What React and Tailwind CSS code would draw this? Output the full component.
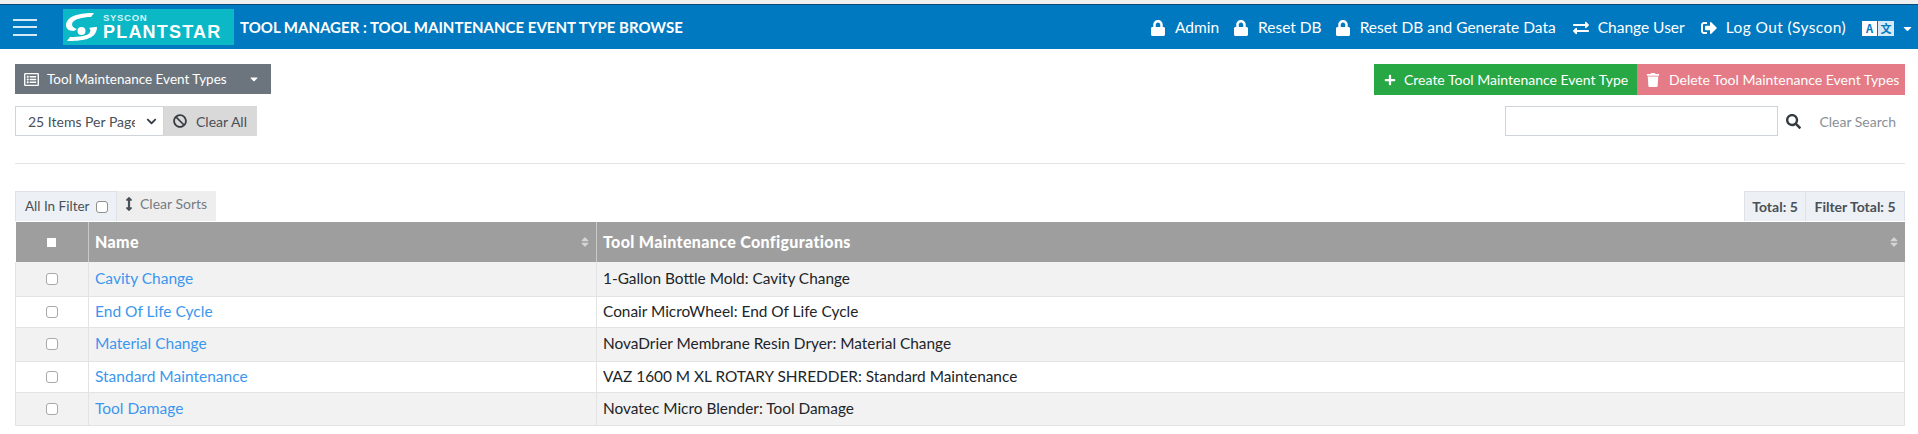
import { FaLock, FaExchangeAlt, FaSignOutAlt, FaPlus, FaTrash, FaSearch, FaBan, FaRegListAlt, FaSort, FaArrowsAltV, FaCaretDown, FaChevronDown } from 'react-icons/fa';

const rows = [
    { name: 'Cavity Change', config: '1-Gallon Bottle Mold: Cavity Change', h: 'h-[34px]' },
    { name: 'End Of Life Cycle', config: 'Conair MicroWheel: End Of Life Cycle', h: 'h-[31px]' },
    { name: 'Material Change', config: 'NovaDrier Membrane Resin Dryer: Material Change', h: 'h-[34px]' },
    { name: 'Standard Maintenance', config: 'VAZ 1600 M XL ROTARY SHREDDER: Standard Maintenance', h: 'h-[31px]' },
    { name: 'Tool Damage', config: 'Novatec Micro Blender: Tool Damage', h: 'h-[33px]' },
];

const NavItem = ({ icon, label, className, labelClass }) => (
    <span className={`flex items-center gap-[9px] ${className || ''}`}>
        {icon}
        <span className={`whitespace-nowrap ${labelClass || ''}`}>{label}</span>
    </span>
);

const RowCheck = () => (
    <input type="checkbox" className="mx-auto block h-[12px] w-[12px] appearance-none rounded-[3px] border border-[#a9a9a9] bg-white" />
);

const Logo = () => (
    <div className="ml-[26px] flex h-[36px] w-[171px] items-center bg-[#0ab8c6] pl-[3px] text-white">
        <svg viewBox="0 0 31 28" className="h-[28px] w-[31px] shrink-0" fill="#fff">
            <path d="M28 0C15 0 1 2 0 12c0 3 2 6 8 6 1-1 2-1 3-2-3-1-5-2-5-5C7 6 17 4 25 4z" />
            <circle cx="15.5" cy="18" r="4" />
            <path d="M31 14c-2 0-5 0-8 1 1 1 2 2 1 4-1 4-11 5-20 5l-3 4c14 0 30-1 30-14z" />
        </svg>
        <div className="ml-[6px] flex flex-col font-['Liberation_Sans',sans-serif] font-bold leading-none">
            <span className="text-[9.5px] tracking-[0.7px] text-[#d7f4f7]">SYSCON</span>
            <span className="mt-[1px] text-[18px] tracking-[1.2px]">PLANTSTAR</span>
        </div>
    </div>
);

export default function App() {
    return (
        <div className="min-h-[434px] bg-white font-['Lato',sans-serif] text-[14px] text-[#212529]">
            <div className="h-[4px] bg-[#efefef]" />
            <nav className="flex h-[45px] items-center border-t border-[#0b4a78] bg-[#0079c1] text-white">
                <div className="ml-[13px] flex w-[24px] flex-col gap-[5.5px]">
                    <div className="h-[2px] bg-[#d5e9f6]" />
                    <div className="h-[2px] bg-[#d5e9f6]" />
                    <div className="h-[2px] bg-[#d5e9f6]" />
                </div>
                <Logo />
                <h1 className="ml-[6px] text-[15px] font-bold">TOOL MANAGER : TOOL MAINTENANCE EVENT TYPE BROWSE</h1>
                <div className="ml-auto mt-[2px] flex items-center pr-[4px] text-[15.5px]">
                    <NavItem icon={<FaLock className="text-[16px]" />} label="Admin" />
                    <NavItem icon={<FaLock className="text-[16px]" />} label="Reset DB" className="ml-[14px]" />
                    <NavItem icon={<FaLock className="text-[16px]" />} label="Reset DB and Generate Data" className="ml-[13px]" />
                    <NavItem icon={<FaExchangeAlt className="text-[16px]" />} label="Change User" className="ml-[17px]" />
                    <NavItem icon={<FaSignOutAlt className="text-[16px]" />} label="Log Out (Syscon)" className="ml-[16px]" labelClass="tracking-[0.4px]" />
                    <div className="ml-[16px] flex h-[15px] w-[32px] gap-[1px] font-['Noto_Sans_CJK_SC','Noto_Sans',sans-serif] text-[11px] font-bold leading-[15px] text-[#0079c1]">
                        <span className="w-[15px] bg-white text-center">A</span>
                        <span className="w-[16px] bg-[#d5e9f6] text-center">文</span>
                    </div>
                    <FaCaretDown className="ml-[7px] text-[13px]" />
                </div>
            </nav>

            <div className="pl-[15px] pr-[13px]">
                <div className="mt-[15px] flex items-start justify-between">
                    <button className="flex h-[30px] w-[256px] items-center bg-[#6c757d] pl-[9px] pr-[11px] text-[13.5px] text-white">
                        <FaRegListAlt className="text-[15px]" />
                        <span className="ml-[8px]">Tool Maintenance Event Types</span>
                        <FaCaretDown className="ml-auto text-[12px]" />
                    </button>
                    <div className="flex h-[31px] text-[14px] text-white">
                        <button className="flex w-[263px] items-center gap-[8px] bg-[#28a745] pl-[10px]">
                            <FaPlus className="text-[12px]" /> Create Tool Maintenance Event Type
                        </button>
                        <button className="flex w-[268px] items-center gap-[9px] bg-[#e47b86] pl-[9px]">
                            <FaTrash className="text-[14px]" /> Delete Tool Maintenance Event Types
                        </button>
                    </div>
                </div>

                <div className="mt-[11px] flex items-center justify-between">
                    <div className="flex h-[30px]">
                        <div className="flex w-[149px] items-center border border-[#ced4da] bg-white pl-[12px] pr-[6px] text-[14px] text-[#495057]">
                            <span className="w-[107px] overflow-hidden whitespace-nowrap">25 Items Per Page</span>
                            <FaChevronDown className="ml-auto text-[11px] text-[#343a40]" />
                        </div>
                        <div className="flex w-[93px] items-center gap-[9px] bg-[#d9d9d9] pl-[9px] text-[14px] text-[#495057]">
                            <FaBan className="text-[14px] text-[#343a40]" /> Clear All
                        </div>
                    </div>
                    <div className="flex items-center">
                        <div className="h-[30px] w-[273px] border border-[#ced4da] bg-white" />
                        <FaSearch className="ml-[8px] text-[15px] text-[#343a40]" />
                        <span className="ml-[18px] mr-[9px] text-[14px] text-[#8a9096]">Clear Search</span>
                    </div>
                </div>

                <hr className="mt-[27px] border-[#e4e4e4]" />

                <div className="mt-[27px] flex items-end justify-between">
                    <div className="flex h-[30px] text-[13.5px] text-[#495057]">
                        <div className="flex w-[102px] items-center border border-b-0 border-[#dee2e6] bg-[#edf1f5] pl-[9px]">
                            All In Filter
                            <input type="checkbox" className="ml-[6px] h-[12px] w-[12px] appearance-none rounded-[3px] border border-[#8f8f8f] bg-white" />
                        </div>
                        <div className="flex w-[99px] items-center bg-[#eeeeee] pb-[5px] pl-[5px] text-[14px] text-[#757c83]">
                            <FaArrowsAltV className="text-[14px] text-[#495057]" />
                            <span className="ml-[4px]">Clear Sorts</span>
                        </div>
                    </div>
                    <div className="flex h-[30px] border border-b-0 border-[#dee2e6] bg-[#edf1f5] text-[14px] font-bold text-[#495057]">
                        <div className="flex w-[61px] items-center justify-center border-r border-[#dee2e6]">Total: 5</div>
                        <div className="flex w-[98px] items-center justify-center">Filter Total: 5</div>
                    </div>
                </div>

                <table className="mt-[1px] w-full table-fixed border-collapse text-[14px]">
                    <thead>
                        <tr className="h-[40px] bg-[#9e9e9e] text-left text-[16px] tracking-[0.35px] text-white">
                            <th className="w-[73px] border-r border-[#c9c9c9] p-0">
                                <div className="mx-auto h-[9px] w-[9px] bg-white" />
                            </th>
                            <th className="w-[508px] border-r border-[#c9c9c9] py-0 pl-[6px] pr-[5px] font-black">
                                <div className="flex items-center justify-between">
                                    <span>Name</span>
                                    <FaSort className="text-[12px] text-[#d5d5d5]" />
                                </div>
                            </th>
                            <th className="py-0 pl-[6px] pr-[5px] font-black">
                                <div className="flex items-center justify-between">
                                    <span>Tool Maintenance Configurations</span>
                                    <FaSort className="text-[12px] text-[#d5d5d5]" />
                                </div>
                            </th>
                        </tr>
                    </thead>
                    <tbody>
                        {rows.map((row, i) => (
                            <tr key={row.name} className={`${row.h} border-b border-[#e3e3e3] ${i % 2 === 0 ? 'bg-[#f2f2f2]' : 'bg-white'}`}>
                                <td className="border-r border-l border-[#e3e3e3] p-0 text-center">
                                    <RowCheck />
                                </td>
                                <td className="border-r border-[#e3e3e3] py-0 pl-[6px] text-[15.5px] text-[#3b97ee]">{row.name}</td>
                                <td className="border-r border-[#e3e3e3] py-0 pl-[6px] text-[15.4px]">{row.config}</td>
                            </tr>
                        ))}
                    </tbody>
                </table>
            </div>
        </div>
    );
}
